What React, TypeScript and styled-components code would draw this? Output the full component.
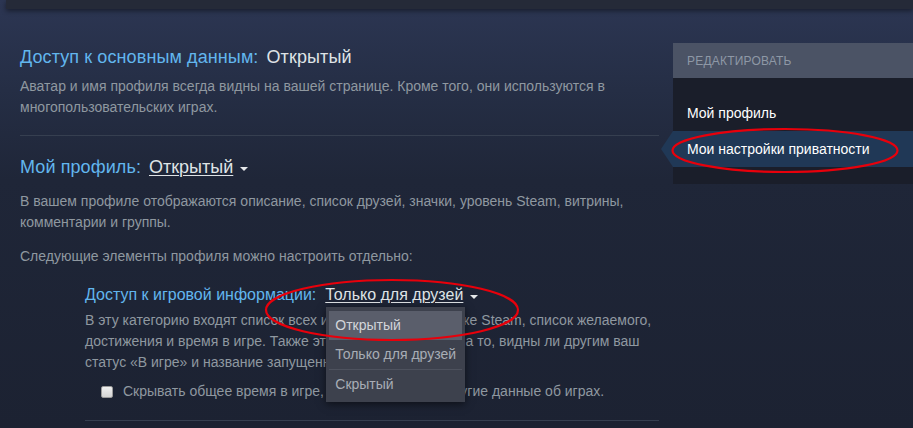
import React from "react";
import styled, { createGlobalStyle } from "styled-components";

const Global = createGlobalStyle`
  html, body { margin: 0; padding: 0; }
  body {
    width: 913px;
    height: 428px;
    overflow: hidden;
    font-family: "Liberation Sans", Arial, sans-serif;
    background: linear-gradient(180deg, #2c3653 0px, #252e45 90px, #1f2638 180px, #1c2232 428px);
  }
`;

const Page = styled.div`
  position: relative;
  width: 913px;
  height: 428px;
  overflow: hidden;
`;

const TopBar = styled.div`
  height: 9px;
  margin-left: 6px;
  background: #252a38;
  box-shadow: 0 2px 5px rgba(0, 0, 0, 0.45);
`;

const Layout = styled.div`
  display: flex;
  align-items: flex-start;
`;

const Content = styled.div`
  width: 640px;
  padding: 36px 0 0 20px;
  box-sizing: content-box;
`;

const Heading = styled.div<{ $sub?: boolean; $mt?: number }>`
  display: flex;
  align-items: center;
  gap: ${(p) => (p.$sub ? "9px" : "8px")};
  font-size: ${(p) => (p.$sub ? "16px" : "18px")};
  line-height: ${(p) => (p.$sub ? "22px" : "24px")};
  letter-spacing: ${(p) => (p.$sub ? "0" : "0.1px")};
  margin-top: ${(p) => p.$mt ?? 0}px;
`;

const Label = styled.span`
  color: #62b6ee;
`;

const Value = styled.span`
  color: #dfe3e6;
`;

const Trigger = styled.span`
  position: relative;
  display: inline-flex;
  align-items: center;
  gap: 7px;
  color: #dfe3e6;
  letter-spacing: 0;
`;

const TriggerText = styled.span`
  text-decoration: underline;
  text-underline-offset: 2px;
  text-decoration-thickness: 1px;
`;

const Caret = styled.span`
  width: 0;
  height: 0;
  border-left: 4px solid transparent;
  border-right: 4px solid transparent;
  border-top: 4px solid #e6e8ea;
  margin-top: 3px;
`;

const Para = styled.p<{ $mt: number }>`
  margin: ${(p) => p.$mt}px 0 0 0;
  font-size: 14px;
  line-height: 21px;
  color: #8f98a0;
`;

const Divider = styled.div<{ $mt: number }>`
  margin-top: ${(p) => p.$mt}px;
  height: 1px;
  background: #363f50;
`;

const SubSection = styled.div`
  margin: 17px 0 0 65px;
`;

const CheckRow = styled.label`
  display: flex;
  align-items: center;
  gap: 10px;
  margin: 8px 0 0 16px;
  font-size: 14px;
  line-height: 21px;
  color: #8f98a0;
`;

const Box = styled.span`
  width: 12px;
  height: 12px;
  border-radius: 2px;
  background: linear-gradient(180deg, #f0f0f0, #d4d4d4);
  border: 1px solid #9a9a9a;
  box-sizing: border-box;
`;

const Menu = styled.div`
  position: absolute;
  left: 1px;
  top: 23px;
  width: 139px;
  padding: 4px 3px 3px 3px;
  box-sizing: border-box;
  background: #3d414d;
  box-shadow: 0 2px 8px rgba(0, 0, 0, 0.55);
  z-index: 2;
`;

const MenuItem = styled.div<{ $active?: boolean; $sep?: boolean }>`
  height: 29px;
  line-height: 29px;
  padding-left: 6px;
  font-size: 14px;
  white-space: nowrap;
  color: ${(p) => (p.$active ? "#d2d5da" : "#a8adb5")};
  background: ${(p) => (p.$active ? "#5a5e6b" : "transparent")};
  border-top: ${(p) => (p.$sep ? "1px solid #4e525e" : "none")};
`;

const Sidebar = styled.div`
  margin: 34px 0 0 14px;
  width: 240px;
  flex-shrink: 0;
`;

const SideHeader = styled.div`
  height: 35px;
  line-height: 36px;
  padding-left: 14px;
  background: #4b5365;
  color: #8e98a6;
  font-size: 12px;
  letter-spacing: 0.2px;
`;

const SideBody = styled.div`
  background: #1a1e2a;
  padding: 17px 0;
`;

const SideItem = styled.div<{ $active?: boolean }>`
  position: relative;
  height: 36px;
  line-height: 36px;
  padding-left: 14px;
  font-size: 14px;
  color: #ffffff;
  background: ${(p) => (p.$active ? "#203856" : "transparent")};
  ${(p) =>
    p.$active &&
    `
    &::before {
      content: "";
      position: absolute;
      left: -12px;
      top: 0;
      width: 0;
      height: 0;
      border-top: 18px solid transparent;
      border-bottom: 18px solid transparent;
      border-right: 12px solid #203856;
    }
  `}
`;

const Annotations = styled.svg`
  position: absolute;
  left: 0;
  top: 0;
  pointer-events: none;
  z-index: 5;
`;

export default function App() {
  return (
    <Page>
      <Global />
      <TopBar />
      <Layout>
        <Content>
          <Heading>
            <Label>Доступ к основным данным:</Label>
            <Value>Открытый</Value>
          </Heading>
          <Para $mt={7}>
            Аватар и имя профиля всегда видны на вашей странице. Кроме того, они используются в
            многопользовательских играх.
          </Para>
          <Divider $mt={17} />
          <Heading $mt={19}>
            <Label>Мой профиль:</Label>
            <Trigger>
              <TriggerText>Открытый</TriggerText>
              <Caret />
            </Trigger>
          </Heading>
          <Para $mt={12}>
            В вашем профиле отображаются описание, список друзей, значки, уровень Steam, витрины,
            комментарии и группы.
          </Para>
          <Para $mt={13}>Следующие элементы профиля можно настроить отдельно:</Para>
          <SubSection>
            <Heading $sub>
              <Label>Доступ к игровой информации:</Label>
              <Trigger>
                <TriggerText>Только для друзей</TriggerText>
                <Caret />
                <Menu>
                  <MenuItem $active>Открытый</MenuItem>
                  <MenuItem>Только для друзей</MenuItem>
                  <MenuItem $sep>Скрытый</MenuItem>
                </Menu>
              </Trigger>
            </Heading>
            <Para $mt={4}>
              В эту категорию входят список всех игр в вашей библиотеке Steam, список желаемого,
              достижения и время в игре. Также этот параметр влияет на то, видны ли другим ваш
              статус «В игре» и название запущенной игры.
            </Para>
            <CheckRow>
              <Box />
              Скрывать общее время в игре, даже если видны другие данные об играх.
            </CheckRow>
            <Divider $mt={18} />
          </SubSection>
        </Content>
        <Sidebar>
          <SideHeader>РЕДАКТИРОВАТЬ</SideHeader>
          <SideBody>
            <SideItem>Мой профиль</SideItem>
            <SideItem $active>Мои настройки приватности</SideItem>
          </SideBody>
        </Sidebar>
      </Layout>
      <Annotations width="913" height="428" viewBox="0 0 913 428">
        <ellipse cx="785" cy="150.5" rx="112.5" ry="21.5" fill="none" stroke="#e8000b" strokeWidth="2.2" />
        <ellipse cx="392" cy="310" rx="126" ry="30" fill="none" stroke="#e8000b" strokeWidth="2.2" />
      </Annotations>
    </Page>
  );
}
